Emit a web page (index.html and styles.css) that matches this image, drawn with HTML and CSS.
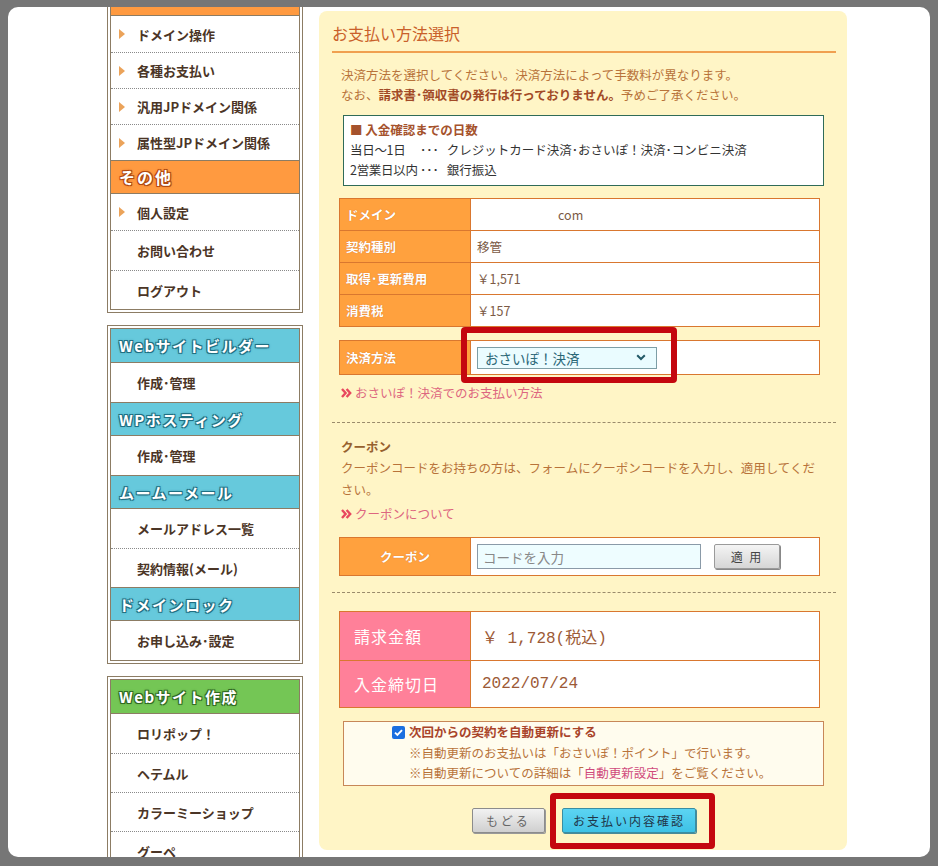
FILE: index.html
```html
<!DOCTYPE html>
<html lang="ja">
<head>
<meta charset="utf-8">
<title>お支払い方法選択</title>
<link rel="stylesheet" href="styles.css">
</head>
<body>
<div class="frame">
  <div class="page">
    <aside class="side">
      <div class="box box-cut">
        <div class="inner">
          <div class="hd hd-o hd-cut"></div>
          <div class="it arrow">ドメイン操作</div>
          <div class="it arrow">各種お支払い</div>
          <div class="it arrow">汎用JPドメイン関係</div>
          <div class="it arrow">属性型JPドメイン関係</div>
          <div class="hd hd-o">その他</div>
          <div class="it arrow">個人設定</div>
          <div class="it tall">お問い合わせ</div>
          <div class="it">ログアウト</div>
        </div>
      </div>
      <div class="box">
        <div class="inner">
          <div class="hd hd-b">Webサイトビルダー</div>
          <div class="it">作成･管理</div>
          <div class="hd hd-b">WPホスティング</div>
          <div class="it">作成･管理</div>
          <div class="hd hd-b">ムームーメール</div>
          <div class="it">メールアドレス一覧</div>
          <div class="it">契約情報(メール)</div>
          <div class="hd hd-b">ドメインロック</div>
          <div class="it">お申し込み･設定</div>
        </div>
      </div>
      <div class="box">
        <div class="inner">
          <div class="hd hd-g">Webサイト作成</div>
          <div class="it">ロリポップ！</div>
          <div class="it">ヘテムル</div>
          <div class="it">カラーミーショップ</div>
          <div class="it">グーペ</div>
        </div>
      </div>
    </aside>

    <main class="panel">
      <h1 class="title">お支払い方法選択</h1>
      <p class="lead">決済方法を選択してください。決済方法によって手数料が異なります。<br>なお、<strong>請求書･領収書の発行は行っておりません。</strong>予めご了承ください。</p>

      <div class="info">
        <div class="info-hd">■ 入金確認までの日数</div>
        <div class="info-row"><span class="info-l">当日〜1日</span><span class="dots">･･･</span>クレジットカード決済･おさいぽ！決済･コンビニ決済</div>
        <div class="info-row"><span class="info-l">2営業日以内</span><span class="dots">･･･</span>銀行振込</div>
      </div>

      <div class="dtable">
        <div class="lab">ドメイン</div><div class="val val-dom">com</div>
        <div class="lab">契約種別</div><div class="val">移管</div>
        <div class="lab">取得･更新費用</div><div class="val">￥1,571</div>
        <div class="lab">消費税</div><div class="val">￥157</div>
      </div>

      <div class="dtable pay">
        <div class="lab">決済方法</div>
        <div class="val">
          <span class="sel hl1">
            <span>おさいぽ！決済</span>
            <svg class="chev" width="10" height="7" viewBox="0 0 10 7"><path d="M1.2 1.2 L5 5 L8.8 1.2" fill="none" stroke="#235a68" stroke-width="2"/></svg>
          </span>
        </div>
      </div>

      <a class="link link-pay"><svg class="raq" width="11" height="10" viewBox="0 0 11 10"><path d="M1 1 L4.6 5 L1 9 M5.6 1 L9.2 5 L5.6 9" fill="none" stroke="#e8485e" stroke-width="2.4"/></svg>おさいぽ！決済でのお支払い方法</a>

      <hr class="sep sep1">

      <h2 class="cp-title">クーポン</h2>
      <p class="cp-text">クーポンコードをお持ちの方は、フォームにクーポンコードを入力し、適用してください。</p>
      <a class="link link-cp"><svg class="raq" width="11" height="10" viewBox="0 0 11 10"><path d="M1 1 L4.6 5 L1 9 M5.6 1 L9.2 5 L5.6 9" fill="none" stroke="#e8485e" stroke-width="2.4"/></svg>クーポンについて</a>

      <div class="dtable coupon">
        <div class="lab lab-c">クーポン</div>
        <div class="val">
          <span class="inp">コードを入力</span>
          <span class="btn-apply">適 用</span>
        </div>
      </div>

      <hr class="sep sep2">

      <div class="dtable total">
        <div class="lab lab-p">請求金額</div><div class="val mono">￥ 1,728(税込)</div>
        <div class="lab lab-p">入金締切日</div><div class="val mono">2022/07/24</div>
      </div>

      <div class="auto">
        <div class="auto-hd">
          <span class="cbox"><svg width="13" height="13" viewBox="0 0 13 13"><rect x="0" y="0" width="13" height="13" rx="2" fill="#1a6fe0"/><path d="M3 6.6 L5.4 9 L10 4.2" fill="none" stroke="#fff" stroke-width="1.9"/></svg></span>
          <span>次回からの契約を自動更新にする</span>
        </div>
        <div class="auto-note">※自動更新のお支払いは「おさいぽ！ポイント」で行います。</div>
        <div class="auto-note">※自動更新についての詳細は「<a class="pink">自動更新設定</a>」をご覧ください。</div>
      </div>

      <div class="btns">
        <span class="btn btn-back">もどる</span>
        <span class="btn btn-go hl2">お支払い内容確認</span>
      </div>
    </main>
  </div>
</div>
</body>
</html>
```

FILE: styles.css
```css
html {
  background: #767676;
}
body {
  margin: 0;
  font-family: "Noto Sans CJK JP", "Noto Sans", sans-serif;
}
.frame {
  margin: 7px 8px 0;
  height: 850px;
  background: #fff;
  border-radius: 10px;
  overflow: hidden;
}
.page {
  display: flex;
  align-items: flex-start;
  padding-left: 99px;
}

/* ---------- sidebar ---------- */
.side {
  width: 196px;
  display: flex;
  flex-direction: column;
  gap: 12px;
  flex-shrink: 0;
}
.box {
  border: 1px solid #8c7c64;
  padding: 2px;
  background: #fff;
}
.box-cut {
  border-top: none;
  padding-top: 0;
}
.inner {
  border: 1px solid #8c7c64;
}
.box-cut .inner {
  border-top: none;
}
.hd {
  box-sizing: border-box;
  height: 34px;
  display: flex;
  align-items: center;
  padding-left: 8px;
  color: #fff;
  font-weight: bold;
  font-size: 15px;
  letter-spacing: 1.5px;
  border-top: 1px solid #8c7c64;
  border-bottom: 1px solid #8c7c64;
}
.hd:first-child {
  border-top: none;
}
.hd-cut {
  height: 9px;
}
.hd-o {
  background: #ff9a40;
  font-size: 16px;
  letter-spacing: 2px;
  text-shadow: 1px 1px 0 #b0480f, -1px -1px 0 #b0480f, 1px -1px 0 #b0480f, -1px 1px 0 #b0480f, 0 0 3px #b0480f;
}
.hd-b {
  background: #66c9dc;
  text-shadow: 1px 1px 0 #1f6f82, -1px -1px 0 #1f6f82, 1px -1px 0 #1f6f82, -1px 1px 0 #1f6f82, 0 0 3px #1f6f82;
}
.hd-g {
  background: #74c655;
  text-shadow: 1px 1px 0 #2f6a22, -1px -1px 0 #2f6a22, 1px -1px 0 #2f6a22, -1px 1px 0 #2f6a22, 0 0 3px #2f6a22;
}
.it {
  box-sizing: border-box;
  height: 39px;
  display: flex;
  align-items: center;
  padding-left: 26px;
  font-size: 13px;
  font-weight: bold;
  color: #4b3526;
}
.it + .it {
  border-top: 1px dotted #8a8a8a;
}
.it.tall {
  height: 40px;
}
.it.arrow {
  height: 36px;
  padding-left: 8px;
}
.it.arrow::before {
  content: "";
  width: 0;
  height: 0;
  border-top: 5px solid transparent;
  border-bottom: 5px solid transparent;
  border-left: 6px solid #eba35a;
  margin-right: 12px;
}

/* ---------- main panel ---------- */
.panel {
  box-sizing: border-box;
  margin: 4px 0 0 16px;
  width: 528px;
  height: 839px;
  background: #fff5c6;
  border-radius: 8px;
  padding: 11px 11px 0 13px;
  font-size: 12.5px;
  color: #b8733a;
}
.title {
  margin: 0;
  font-size: 16px;
  font-weight: normal;
  line-height: 22px;
  color: #c9602a;
  padding-bottom: 7px;
  border-bottom: 2px solid #f0a050;
}
.lead {
  margin: 12px 0 0 9px;
  line-height: 20px;
}
.lead strong {
  color: #a24a26;
}
.info {
  box-sizing: border-box;
  margin: 10px 0 0 11px;
  width: 481px;
  border: 1px solid #2f6b58;
  background: #fff;
  padding: 4px 6px 5px;
  line-height: 20px;
  color: #333;
}
.info-hd {
  color: #a5522c;
  font-weight: bold;
}
.info-row {
  display: flex;
  white-space: nowrap;
}
.info-l {
  flex-shrink: 0;
  width: 70px;
  letter-spacing: -0.3px;
}
.dots {
  margin-right: 8px;
}

.dtable {
  box-sizing: border-box;
  margin: 12px 0 0 7px;
  width: 481px;
  display: grid;
  grid-template-columns: 131px 1fr;
  border-top: 1px solid #d9772f;
  border-left: 1px solid #d9772f;
}
.dtable > div {
  box-sizing: border-box;
  height: 32px;
  border-right: 1px solid #d9772f;
  border-bottom: 1px solid #d9772f;
  display: flex;
  align-items: center;
}
.lab {
  background: #ffa13e;
  color: #fff;
  font-weight: bold;
  padding-left: 6px;
  text-shadow: 0 0 1px #c8641e;
}
.val {
  background: #fff;
  color: #7b5a45;
  padding-left: 6px;
}
.val-dom {
  padding-left: 87px;
}
.dtable.pay {
  margin-top: 13px;
}
.dtable.pay > div {
  height: 34px;
}
.sel {
  position: relative;
  box-sizing: border-box;
  width: 180px;
  height: 22px;
  border: 1px solid #7d9ea6;
  background: #eafcff;
  color: #2a6777;
  font-size: 13.5px;
  display: flex;
  align-items: center;
  justify-content: space-between;
  padding: 0 10px 0 7px;
}
.hl1::after {
  content: "";
  position: absolute;
  left: -17px;
  top: -21px;
  right: -21px;
  bottom: -15px;
  border: 6px solid #c4070f;
  border-radius: 4px;
}

.link {
  display: flex;
  align-items: center;
  line-height: 20px;
  color: #dd6680;
  margin-left: 9px;
}
.link-pay {
  margin-top: 8px;
}
.raq {
  margin-right: 3px;
}
.sep {
  margin: 0;
  border: none;
  border-top: 1px dashed #9a8b6c;
}
.sep1 {
  margin-top: 19px;
}
.cp-title {
  margin: 14px 0 0 9px;
  font-size: 12.5px;
  line-height: 20px;
  color: #96602e;
}
.cp-text {
  margin: 0 0 0 9px;
  width: 480px;
  line-height: 22px;
}
.link-cp {
  margin-top: 3px;
}
.dtable.coupon {
  margin-top: 13px;
}
.dtable.coupon > div {
  height: 38px;
}
.lab-c {
  justify-content: center;
  padding-left: 0;
}
.inp {
  box-sizing: border-box;
  width: 224px;
  height: 25px;
  border: 1px solid #8a9aa8;
  background: #eefdff;
  color: #888;
  font-size: 13.5px;
  display: flex;
  align-items: center;
  padding-left: 5px;
}
.btn-apply {
  box-sizing: border-box;
  margin-left: 13px;
  width: 66px;
  height: 25px;
  border: 1px solid #9a9a9a;
  border-radius: 2px;
  background: linear-gradient(#f4f4f4, #d6d6d6);
  box-shadow: 1px 1px 0 #888;
  color: #444;
  font-size: 12px;
  display: flex;
  align-items: center;
  justify-content: center;
  letter-spacing: 2px;
}
.sep2 {
  margin-top: 16px;
}
.dtable.total {
  margin-top: 18px;
}
.dtable.total > div {
  height: 49px;
}
.dtable.total > div:nth-child(n+3) {
  height: 47px;
}
.lab-p {
  background: #ff8099;
  font-weight: normal;
  font-size: 16px;
  letter-spacing: 1px;
  padding-left: 14px;
  text-shadow: none;
}
.mono {
  font-family: "Liberation Mono", "Noto Sans CJK JP", monospace;
  font-size: 16px;
  color: #9c5a36;
  padding-left: 11px;
}

.auto {
  box-sizing: border-box;
  margin: 13px 0 0 11px;
  width: 481px;
  border: 1px solid #c78758;
  background: #fffcee;
  padding: 0 0 1px 48px;
  line-height: 20.5px;
}
.auto-hd {
  display: flex;
  align-items: center;
  color: #a9442a;
  font-weight: bold;
}
.cbox {
  display: flex;
  margin-right: 4px;
}
.auto-note {
  padding-left: 17px;
}
.pink {
  color: #d04a7c;
}

.btns {
  margin-top: 22px;
  display: flex;
  justify-content: center;
  gap: 17px;
}
.btn {
  position: relative;
  box-sizing: border-box;
  height: 25px;
  display: flex;
  align-items: center;
  justify-content: center;
  font-size: 12px;
  letter-spacing: 3px;
  border-radius: 2px;
}
.btn-back {
  width: 73px;
  border: 1px solid #8c8c8c;
  background: linear-gradient(#f2f2f2, #cfcfcf);
  color: #666;
  box-shadow: 1px 1px 0 #999;
}
.btn-go {
  width: 134px;
  border: 1px solid #3a8ea2;
  background: linear-gradient(#5cd4f2, #3ec2e6);
  color: #1f3548;
  letter-spacing: 2px;
  box-shadow: 1px 1px 0 #4a8a98;
}
.hl2::after {
  content: "";
  position: absolute;
  left: -13px;
  top: -16px;
  right: -20px;
  bottom: -17px;
  border: 6px solid #c4070f;
  border-radius: 4px;
}
```
